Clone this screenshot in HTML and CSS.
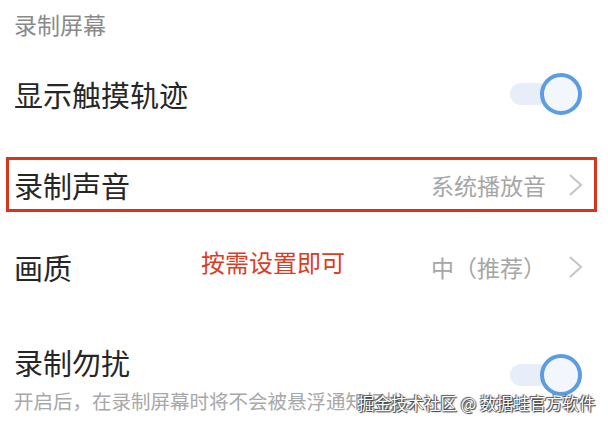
FILE: index.html
```html
<!DOCTYPE html>
<html lang="zh-CN">
<head>
  <meta charset="UTF-8">
  <meta name="viewport" content="width=device-width, initial-scale=1.0">
  <title>录制屏幕设置</title>
  <link rel="stylesheet" href="styles.css">
</head>
<body>
  <div class="section-title">录制屏幕</div>

  <!-- 显示触摸轨迹 -->
  <div class="row row-touch">
    <span class="label">显示触摸轨迹</span>
    <span class="switch on"><span class="knob"></span></span>
  </div>

  <!-- 录制声音，红框标注 -->
  <div class="row row-sound">
    <div class="highlight">
      <span class="label">录制声音</span>
      <span class="value">系统播放音</span>
      <svg class="chevron" viewBox="0 0 15 22"><polyline points="2,1 13,11 2,21" /></svg>
    </div>
  </div>

  <!-- 画质 -->
  <div class="row row-quality">
    <span class="label">画质</span>
    <span class="note">按需设置即可</span>
    <span class="value">中（推荐）</span>
    <svg class="chevron" viewBox="0 0 15 22"><polyline points="2,1 13,11 2,21" /></svg>
  </div>

  <!-- 录制勿扰 -->
  <div class="row row-dnd">
    <div class="text-col">
      <span class="label">录制勿扰</span>
      <span class="desc">开启后，在录制屏幕时将不会被悬浮通知打扰。</span>
    </div>
    <span class="switch on"><span class="knob"></span></span>
    <span class="watermark">掘金技术社区 @ 数据蛙官方软件</span>
  </div>
</body>
</html>
```

FILE: styles.css
```css
body {
  margin: 0;
  background: #fff;
  font-family: "Noto Sans CJK SC", "Noto Sans", sans-serif;
  width: 608px;
  height: 429px;
  overflow: hidden;
}

.section-title {
  height: 48px;
  box-sizing: border-box;
  padding: 9px 0 0 14px;
  font-size: 23px;
  line-height: 30px;
  color: #8a8a8a;
}

.row {
  position: relative;
  display: flex;
  align-items: center;
  padding: 0 25px 0 14px;
}

.label {
  font-size: 29px;
  color: #262626;
  flex: 1;
}

.value {
  font-size: 23px;
  color: #a6a6a6;
  margin-right: 22px;
}

.chevron {
  width: 15px;
  height: 22px;
  fill: none;
  stroke: #c4c4c4;
  stroke-width: 2;
}

.row-touch {
  height: 92px;
}

.row-sound {
  height: 89px;
  padding: 0 11px 0 6px;
}

.highlight {
  flex: 1;
  display: flex;
  align-items: center;
  height: 55px;
  box-sizing: border-box;
  border: 3px solid #d8361c;
  padding: 0 11px 0 5px;
}

.row-quality {
  height: 75px;
}

.note {
  position: absolute;
  left: 201px;
  top: 15px;
  font-size: 24px;
  color: #de3b1f;
}

.row-dnd {
  height: 125px;
  align-items: flex-start;
  padding-top: 37px;
  box-sizing: border-box;
}

.text-col {
  flex: 1;
  display: flex;
  flex-direction: column;
}

.desc {
  font-size: 19.5px;
  color: #a8a8a8;
  margin-top: 3px;
}

.switch {
  position: relative;
  width: 72px;
  height: 42px;
  flex: none;
  margin-right: 1px;
}

.switch::before {
  content: "";
  position: absolute;
  left: 0;
  top: 10px;
  width: 40px;
  height: 22px;
  border-radius: 11px;
  background: #e7eefa;
}

.knob {
  position: absolute;
  right: 0;
  top: 0;
  width: 42px;
  height: 42px;
  box-sizing: border-box;
  border-radius: 50%;
  border: 4px solid #5b9de2;
  background: #f3f7fd;
}

.row-dnd .switch {
  margin-top: 13px;
}

.watermark {
  position: absolute;
  left: 358px;
  top: 87px;
  font-size: 16.5px;
  line-height: 24px;
  color: #fff;
  text-shadow: 0 0 1px #333, 1px 1px 1px #333, -1px -1px 1px #555;
}
```
